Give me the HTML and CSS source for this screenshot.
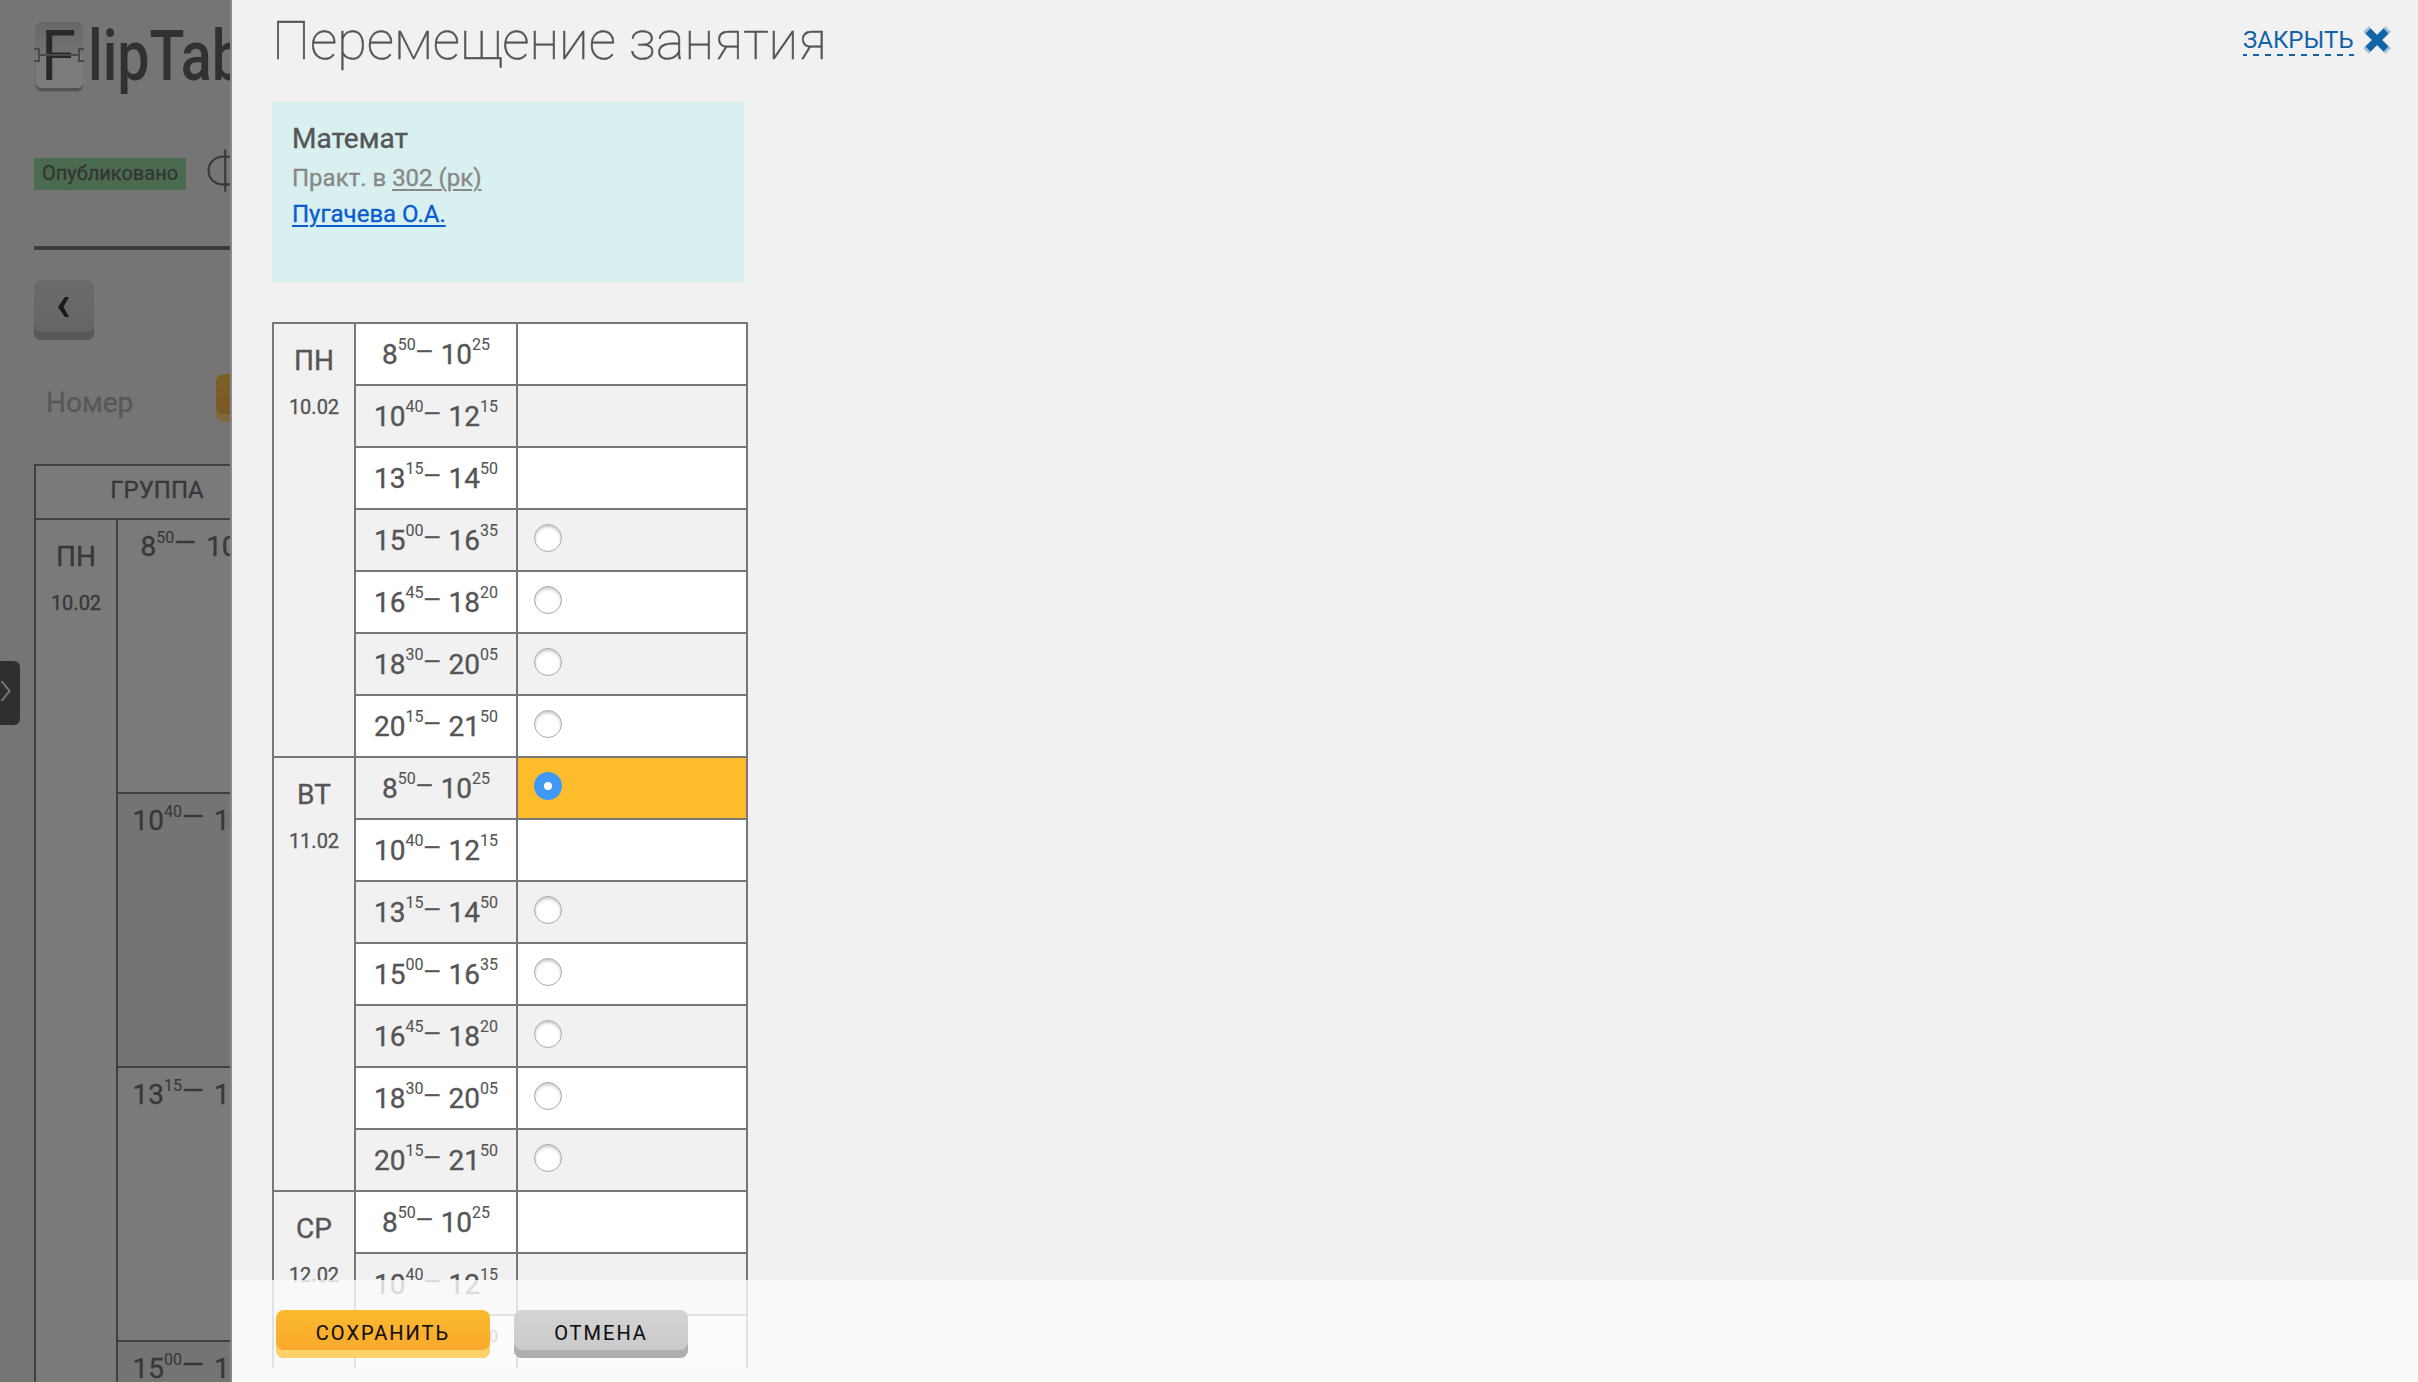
FILE: index.html
```html
<!DOCTYPE html>
<html lang="ru">
<head>
<meta charset="utf-8">
<title>FlipTable</title>
<link rel="stylesheet" href="styles.css">
</head>
<body>
<div class="app">
  <main class="page">
    <svg class="logo" width="196" height="80" viewBox="0 0 196 80">
      <defs><linearGradient id="tile" x1="0" y1="0" x2="0" y2="1"><stop offset="0" stop-color="#686868"/><stop offset=".48" stop-color="#727272"/><stop offset=".5" stop-color="#7a7a7a"/><stop offset="1" stop-color="#7c7c7c"/></linearGradient></defs>
      <rect class="tile-glow" x="1" y="6" width="48" height="70" rx="6"/>
      <rect class="tile-edge" x="2" y="10" width="47" height="65" rx="6"/>
      <rect x="2" y="7" width="47" height="65" rx="5" fill="url(#tile)"/>
      <text class="logo-letter" x="7" y="64" textLength="35" lengthAdjust="spacingAndGlyphs">F</text>
      <path class="hinge" d="M0 33h5v12h-5M50 33h-5v12h5M5 39h40"/>
      <text class="logo-word" x="54" y="64" textLength="156" lengthAdjust="spacingAndGlyphs">lipTab</text>
    </svg>
    <div class="status"><span class="badge">Опубликовано</span><span class="faculty">Ф</span></div>
    <hr class="rule">
    <div class="back"><svg width="14" height="20" viewBox="0 0 14 20"><path d="M8 0h4L6.500 10 12 20H8L1 10z"/></svg></div>
    <div class="filter"><span class="placeholder">Номер</span><span class="filter-go"></span></div>
    <div class="grid">
      <div class="grid-head">ГРУППА</div>
      <div class="grid-body">
        <div class="day"><b>ПН</b><i>10.02</i></div>
        <div class="grid-times">
          <div class="slot">8<sup>50</sup><span class="dash">—</span>10<sup>25</sup></div>
          <div class="slot">10<sup>40</sup><span class="dash">—</span>12<sup>15</sup></div>
          <div class="slot">13<sup>15</sup><span class="dash">—</span>14<sup>50</sup></div>
          <div class="slot">15<sup>00</sup><span class="dash">—</span>16<sup>35</sup></div>
        </div>
      </div>
    </div>
    <div class="side-tab"><svg width="12" height="22" viewBox="0 0 12 22"><path d="M1.500 1 9.500 11 1.500 21"/></svg></div>
  </main>
  <section class="panel">
    <header class="panel-head">
      <h1>Перемещение занятия</h1>
      <div class="close"><span class="close-text">ЗАКРЫТЬ</span><svg width="28" height="28" viewBox="0 0 28 28"><path class="soft" d="M3 3 25 25M25 3 3 25"/><path d="M5 5 23 23M23 5 5 23"/></svg></div>
    </header>
    <div class="scroll">
      <div class="card">
        <div class="subject">Математ</div>
        <div class="room">Практ. в <u>302 (рк)</u></div>
        <div class="teacher"><u>Пугачева О.А.</u></div>
      </div>
      <div class="week" id="week"></div>
    </div>
    <footer class="actions"><button class="btn save">СОХРАНИТЬ</button><button class="btn cancel">ОТМЕНА</button></footer>
  </section>
</div>
<script src="app.js"></script>
</body>
</html>
```
FILE: styles.css
```css
* { box-sizing: border-box; }
body { margin: 0; font-family: Roboto, "Open Sans", sans-serif; color: #555; background: #f1f1f1; -webkit-text-stroke: .35px currentColor; }
.app { display: flex; width: 2418px; height: 1382px; overflow: hidden; }

.page { position: relative; width: 230px; flex: none; height: 1382px; padding: 16px 0 0 34px; overflow: hidden; background: #757575; color: #383838; }
.logo { display: block; overflow: hidden; -webkit-text-stroke: 0; }
.logo-letter, .logo-word { font-size: 70px; font-weight: 500; fill: #303231; }
.logo-letter { font-weight: 400; fill: #292929; }
.tile-glow { fill: #6c6c6c; }
.tile-edge { fill: #535353; }
.hinge { fill: none; stroke: #4a4a4a; stroke-width: 2; }
.status { display: flex; height: 42px; margin-top: 50px; align-items: center; white-space: nowrap; }
.badge { width: 152px; height: 32px; margin-top: 14px; flex: none; line-height: 31px; font-size: 20px; text-align: center; background: #4b6b50; color: #353535; }
.faculty { margin: 9px 0 0 20px; font-size: 54px; font-weight: 100; line-height: 42px; -webkit-text-stroke-width: .6px; }
.rule { height: 4px; margin: 58px 0 0; border: 0; background: #3b3b3b; }
.back { display: flex; width: 60px; height: 60px; margin-top: 30px; border-radius: 7px; background: linear-gradient(#6b6b6b, #646464); box-shadow: inset 0 -8px #585858; justify-content: center; padding-top: 17px; }
.back svg { fill: #1a1a1a; margin-left: -1px; }
.filter { display: flex; height: 48px; margin-top: 34px; }
.placeholder { width: 182px; flex: none; padding: 12px 0 0 12px; font-size: 28px; line-height: 33px; color: #585858; }
.filter-go { width: 60px; flex: none; height: 48px; border-radius: 8px; background: linear-gradient(#7c6227, #7a5623); box-shadow: inset 0 -8px #7d6b3e; }
.grid { width: 248px; margin-top: 42px; border: 2px solid #404040; background: #7a7a7a; }
.grid-head { height: 54px; padding-right: 2px; line-height: 49px; font-size: 24px; text-align: center; border-bottom: 2px solid #404040; }
.grid-body { display: flex; height: 1100px; }
.grid-body .day { width: 82px; border-right: 2px solid #404040; }
.grid-times { flex: 1; }
.slot { height: 274px; padding-right: 2px; border-bottom: 2px solid #404040; line-height: 53px; font-size: 28px; text-align: center; white-space: nowrap; }
.slot:nth-child(even) { background: #747474; }
.day { flex: none; text-align: center; }
.day b, .day i { display: block; font-weight: 400; font-style: normal; }
.day b { padding-top: 20px; font-size: 28px; line-height: 33px; }
.day i { padding-top: 18px; font-size: 20px; line-height: 24px; }
sup { font-size: 16px; line-height: 0; vertical-align: 13px; -webkit-text-stroke-width: .1px; }
.dash { display: inline-block; width: 32px; text-align: left; line-height: 0; vertical-align: 4px; }
.slot .dash { font-size: 28px; }
.side-tab { position: absolute; left: 0; top: 661px; width: 20px; height: 64px; padding-top: 19px; border-radius: 0 6px 6px 0; background: #2f2f2f; }
.side-tab svg { display: block; fill: none; stroke: #777; stroke-width: 2; }

.panel { position: relative; display: flex; flex-direction: column; flex: 1; height: 1382px; padding: 0 25px 14px 40px; border-left: 2px solid #888; background: #f1f1f1; }
.panel-head { display: flex; height: 102px; flex: none; justify-content: space-between; }
h1 { margin: 9px 0 0; font-size: 54px; font-weight: 100; line-height: 64px; white-space: nowrap; -webkit-text-stroke-width: .6px; }
.close { display: flex; padding: 26px 2px 0 0; color: #1163a8; -webkit-text-stroke: 0; }
.close-text { width: 111px; height: 30px; margin-right: 9px; font-size: 24px; line-height: 28px; background: repeating-linear-gradient(90deg, #1163a8 0 6px, transparent 6px 12px) -2px 28px / 120px 2px no-repeat; white-space: nowrap; }
.close svg { stroke: #1163a8; stroke-width: 7; }
.close .soft { stroke: #1163a8; stroke-opacity: .35; stroke-width: 8; }
.scroll { flex: 1; min-height: 0; overflow: hidden; }
.card { width: 472px; height: 180px; padding: 20px; background: #d8f0ef; white-space: nowrap; }
.subject { font-size: 28px; line-height: 33px; }
.room { margin-top: 8px; font-size: 24px; line-height: 30px; color: #888; }
.teacher { margin-top: 6px; font-size: 24px; line-height: 30px; color: #0b5cd0; }
u { text-underline-offset: 3px; text-decoration-thickness: 1.500px; }
.week { width: 476px; margin-top: 40px; border: 2px solid #777; border-bottom: 0; }
.week-day { display: flex; border-bottom: 2px solid #777; }
.week-day .day { width: 82px; border-right: 2px solid #777; }
.rows { flex: 1; }
.row { display: flex; height: 62px; border-bottom: 2px solid #777; }
.row:last-child { height: 60px; border-bottom: 0; }
.row.light { background: #fff; }
.time { width: 162px; border-right: 2px solid #777; line-height: 61px; font-size: 28px; text-align: center; white-space: nowrap; }
.time sup { vertical-align: 14px; }
.time .dash { width: 25px; font-size: 22px; vertical-align: 5px; }
.cell { flex: 1; padding: 14px 16px; }
.cell.chosen { background: #fdbc2c; }
.radio { display: block; width: 28px; height: 28px; border-radius: 50%; border: 1px solid #aaa; background: #fff; box-shadow: inset 0 2px 3px rgba(0,0,0,.22); }
.chosen .radio { border: 0; background: radial-gradient(circle, #fff 3.700px, #4199f7 4.500px); box-shadow: none; }
.actions { position: absolute; left: 0; right: 0; bottom: 0; display: flex; height: 102px; padding: 30px 0 0 44px; gap: 24px; background: rgba(251,251,251,.8); }
.btn { height: 48px; padding: 0 0 2px; border: 0; border-radius: 8px; font: 20px/46px Roboto, sans-serif; letter-spacing: 2px; color: #111; -webkit-text-stroke: .15px currentColor; }
.save { width: 214px; background: linear-gradient(#fbba2f, #fba92b 40px); box-shadow: inset 0 -8px #fdd268; }
.cancel { width: 174px; background: linear-gradient(#d4d4d4, #cacaca 40px); box-shadow: inset 0 -8px #afafaf; }
```
FILE: app.js
```js
const times = [['8','50','10','25'],['10','40','12','15'],['13','15','14','50'],['15','00','16','35'],['16','45','18','20'],['18','30','20','05'],['20','15','21','50']];
const days = [
  { name: 'ПН', date: '10.02', free: [3, 4, 5, 6] },
  { name: 'ВТ', date: '11.02', free: [0, 2, 3, 4, 5, 6], chosen: 0 },
  { name: 'СР', date: '12.02', free: [] }
];
document.getElementById('week').innerHTML = days.map((day, d) =>
  `<div class="week-day"><div class="day"><b>${day.name}</b><i>${day.date}</i></div><div class="rows">` +
  times.map((t, i) =>
    `<div class="row${(d + i) % 2 ? '' : ' light'}"><div class="time">${t[0]}<sup>${t[1]}</sup><span class="dash">—</span>${t[2]}<sup>${t[3]}</sup></div>` +
    `<div class="cell${day.chosen === i ? ' chosen' : ''}">${day.free.includes(i) ? '<span class="radio"></span>' : ''}</div></div>`
  ).join('') + '</div></div>'
).join('');
```
